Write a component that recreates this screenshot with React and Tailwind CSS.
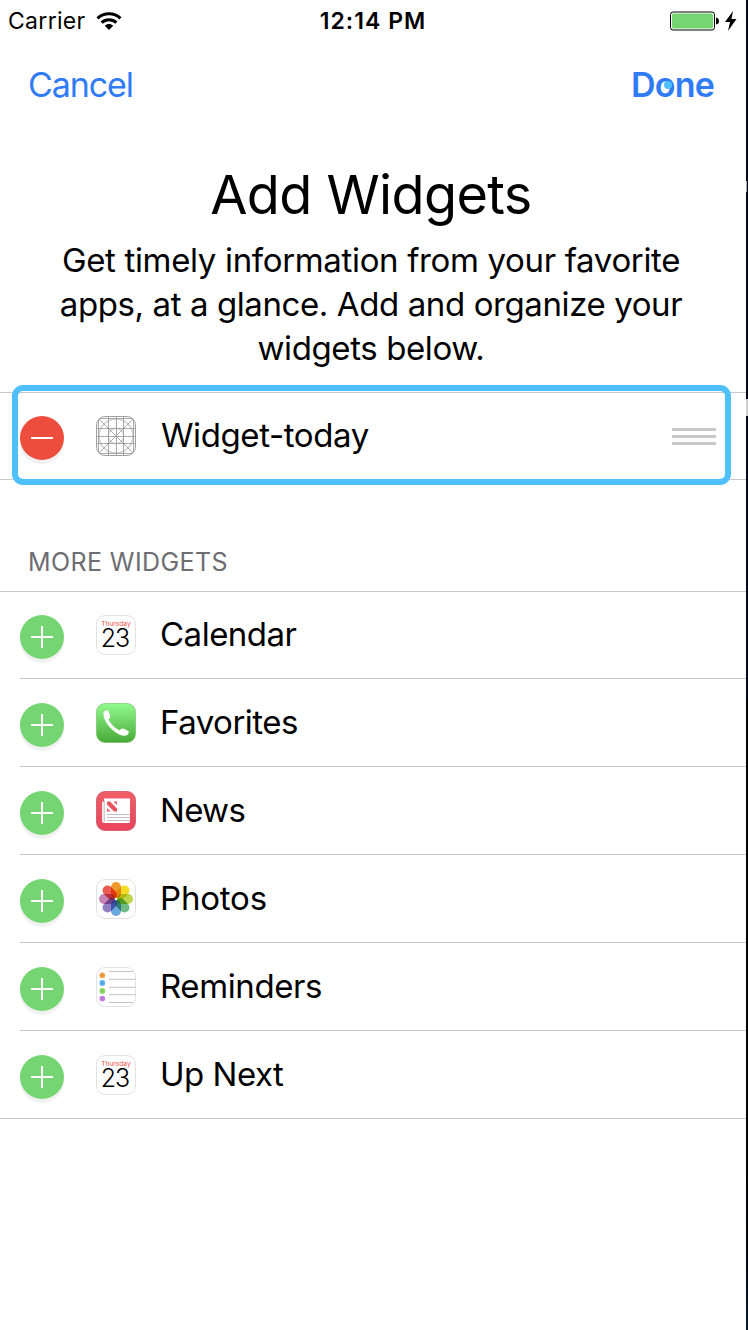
import React from "react";

function RoundButton({ minus }) {
  return (
    <span
      className={
        "mt-6 flex h-11 w-11 shrink-0 items-center justify-center rounded-full shadow-[0_4px_0_#f1f1f1] " +
        (minus ? "bg-[#ec4d3d]" : "bg-[#75d572]")
      }
    >
      <svg width="22" height="22" viewBox="0 0 22 22" stroke="#fff" strokeWidth="2">
        <path d={minus ? "M0 11H22" : "M0 11H22M11 0V22"} />
      </svg>
    </span>
  );
}

function GridIcon() {
  return (
    <svg className="block" width="40" height="40" viewBox="0 0 40 40" fill="none" stroke="#a0a0a0" strokeWidth="1">
      <circle cx="20" cy="20" r="17" stroke="#cfcfcf" strokeWidth="1.6" />
      <circle cx="20" cy="20" r="7.8" stroke="#cfcfcf" strokeWidth="1.4" />
      <rect x="0.5" y="0.5" width="39" height="39" rx="8.5" />
      <path d="M2.5 4V36M12.5 1V39M20.5 1V39M27.5 1V39M37.5 4V36M4 2.5H36M1 12.5H39M1 20.5H39M1 27.5H39M4 37.5H36" strokeWidth="0.9" />
      <path d="M3 3L37 37M37 3L3 37" strokeWidth="0.9" />
    </svg>
  );
}

function CalendarIcon() {
  return (
    <span className="flex h-10 w-10 flex-col items-center rounded-[9px] border border-[#e2e2e4] bg-white pt-[4px]">
      <span className="text-[6.6px] leading-[8px] whitespace-nowrap text-[#ec4d3d]">Thursday</span>
      <span className="mr-[2px] text-[25px] leading-[20px] font-light tracking-[-1px] text-black">23</span>
    </span>
  );
}

function PhoneIcon() {
  return (
    <svg className="block" width="40" height="40" viewBox="0 0 40 40">
      <defs>
        <linearGradient id="phone" x1="0" y1="0" x2="0" y2="1">
          <stop offset="0" stopColor="#93fa8f" />
          <stop offset="1" stopColor="#47aa37" />
        </linearGradient>
      </defs>
      <rect x="0.5" y="0.5" width="39" height="39" rx="8.5" fill="url(#phone)" stroke="#58b64c" strokeOpacity="0.5" />
      <path
        fill="#fff"
        d="M7.4 10.4C7.4 8.6 9.2 7.2 10.8 7.2C12 7.2 12.6 8.5 13.2 10L14.2 12.7C14.7 14.1 13.9 14.8 13.1 15.5C12.3 16.2 12.5 16.7 13.1 17.8C14.9 20.8 18.5 24.5 21.8 26.6C23 27.3 23.6 27.2 24.4 26.4C25.2 25.5 26 25.1 27.3 25.6L31 27.3C32.5 28 33 28.6 32.6 30C32 32.1 30.2 33 27.8 32.7C19.8 31.7 7.6 20.4 7.4 10.4Z"
      />
    </svg>
  );
}

function NewsIcon() {
  return (
    <svg className="block" width="40" height="40" viewBox="0 0 40 40">
      <defs>
        <linearGradient id="news" x1="0" y1="0" x2="0" y2="1">
          <stop offset="0" stopColor="#ef6068" />
          <stop offset="1" stopColor="#ea445c" />
        </linearGradient>
      </defs>
      <rect x="0.5" y="0.5" width="39" height="39" rx="8.5" fill="url(#news)" stroke="#c9475a" strokeOpacity="0.7" />
      <path d="M6 11.5Q6 10.5 7 10.5H10V32H8Q6 32 6 30Z" fill="#f4f1f1" />
      <path d="M8 7.5H34V30.5Q34 32 32.5 32H7.5Q8.5 31.5 8.5 30Z" fill="#fff" />
      <path d="M8.3 9V31" stroke="#b8a6a8" strokeWidth="0.7" />
      <path d="M11 10.5H14L21 17.5V20.5H18L11 13.5ZM17.5 10.5H21V14ZM11 17V20.5H14.5Z" fill="#ec5361" />
      <path d="M22.5 23.5H34M11 23.5H34M11 26.5H34M11 29.5H34" stroke="#bfc0c2" strokeWidth="1.2" />
    </svg>
  );
}

const petals = [
  ["#f09a2e", 0],
  ["#f2dc25", 45],
  ["#bdd54b", 90],
  ["#6dbb83", 135],
  ["#6ba6de", 180],
  ["#9080c2", 225],
  ["#c784b8", 270],
  ["#ea5b51", 315],
];

function PhotosIcon() {
  return (
    <svg className="isolate block" width="40" height="40" viewBox="0 0 40 40">
      <rect x="0.5" y="0.5" width="39" height="39" rx="8.5" fill="#fff" stroke="#e2e2e4" />
      {petals.map(([color, angle]) => (
        <rect
          key={angle}
          className="mix-blend-multiply"
          x="15"
          y="3"
          width="10"
          height="16"
          rx="5"
          fill={color}
          transform={`rotate(${angle} 20 20)`}
        />
      ))}
      <circle cx="20" cy="20" r="1" fill="#fff" />
    </svg>
  );
}

function RemindersIcon() {
  return (
    <svg className="block" width="40" height="40" viewBox="0 0 40 40">
      <rect x="0.5" y="0.5" width="39" height="39" rx="8.5" fill="#fff" stroke="#e2e2e4" />
      <path d="M13 4.5H37M13 12.3H39.5M13 20.3H39.5M13 27.7H39.5M13 35.5H37" stroke="#c4c4c6" strokeWidth="1" />
      {[["#f5a44a", 8.3], ["#5db4f3", 16], ["#8edc66", 24], ["#c784e6", 31.6]].map(([color, y]) => (
        <g key={y} fill={color}>
          <circle cx="6.3" cy={y} r="2.9" />
          <circle cx="6.3" cy={y} r="1.2" fill="#000" fillOpacity="0.12" />
        </g>
      ))}
    </svg>
  );
}

const widgets = [
  ["Calendar", CalendarIcon, "tracking-[-0.5px]"],
  ["Favorites", PhoneIcon, "tracking-[-0.5px]"],
  ["News", NewsIcon, "tracking-[-0.7px]"],
  ["Photos", PhotosIcon, "tracking-[-0.2px]"],
  ["Reminders", RemindersIcon, "tracking-[-0.4px]"],
  ["Up Next", CalendarIcon, "tracking-[-0.5px]"],
];

export default function App() {
  return (
    <div className="flex h-[1330px] w-[748px] overflow-hidden bg-white font-['Inter',sans-serif] text-black">
      <main className="flex w-[746px] flex-col">
        <header className="grid h-[41px] grid-cols-3 items-center">
          <div className="flex items-center gap-[10px] pl-2">
            <span className="text-[23px] leading-[42px] tracking-[0.3px]">Carrier</span>
            <svg width="26" height="18" viewBox="0 0 26 18" fill="none" stroke="#000" strokeWidth="3">
              <path d="M1.5 6.3C8 0.2 18 0.2 24.5 6.3" />
              <path d="M5.6 10.7C9.8 6.8 16.2 6.8 20.4 10.7" />
              <path d="M8.8 13.8C11.2 11.4 14.8 11.4 17.2 13.8L13 18Z" fill="#000" stroke="none" />
            </svg>
          </div>
          <div className="text-center text-[23px] leading-[42px] font-semibold tracking-[1.05px]">12:14 PM</div>
          <div className="flex items-center justify-end gap-[5px] pr-[9px]">
            <svg width="50" height="20" viewBox="0 0 50 20">
              <rect x="0.5" y="1" width="44" height="18" rx="2.5" fill="#fff" stroke="#000" />
              <rect x="2" y="2.5" width="41" height="15" rx="1.5" fill="#75d572" />
              <path d="M46 6.5Q49 7 49 10Q49 13 46 13.5Z" />
            </svg>
            <svg width="12" height="20" viewBox="0 0 12 20">
              <path d="M8 0L0 11H5L3 20L11.5 8H6.5Z" />
            </svg>
          </div>
        </header>

        <nav className="flex h-[88px] items-center justify-between pr-[32px] pl-7 text-[#2f7cf6]">
          <button className="text-[34px] leading-[44px] tracking-[-1.1px]">Cancel</button>
          <button className="relative text-[34px] leading-[44px] font-semibold tracking-[-0.8px]">
            Done
            <span className="absolute top-[18px] left-[33px] h-2 w-2 rounded-full bg-[#4fc0fb]" />
          </button>
        </nav>

        <section className="flex h-[263px] flex-col items-center pt-[32px] pr-1 text-center">
          <h1 className="text-[54px] leading-[68px] tracking-[-0.6px]">Add Widgets</h1>
          <p className="mt-[9px] text-[33px] leading-[44px] tracking-[-0.4px]">
            <span className="tracking-[-0.34px]">Get timely information from your favorite</span>
            <br />
            apps, at a glance. Add and organize your
            <br />
            widgets below.
          </p>
        </section>

        <section className="relative flex h-[88px] items-start border-y border-[#c8c7cc] pl-5">
          <div className="-mt-px">
            <RoundButton minus />
          </div>
          <div className="mt-[23px] ml-8">
            <GridIcon />
          </div>
          <span className="mt-[20px] ml-[25px] text-[33px] leading-[44px] tracking-[-0.4px]">Widget-today</span>
          <span className="mt-[35px] mr-[30px] ml-auto flex flex-col gap-1">
            <span className="h-[3px] w-11 bg-[#c7c7cc]" />
            <span className="h-[3px] w-11 bg-[#c7c7cc]" />
            <span className="h-[3px] w-11 bg-[#c7c7cc]" />
          </span>
          <div className="absolute -top-2 left-3 h-[100px] w-[719px] rounded-[11px] border-6 border-[#4fc0fb]" />
        </section>

        <h2 className="h-[111px] pt-[65px] pl-7 text-[25px] leading-[34px] tracking-[0.4px] text-[#6d6d72]">MORE WIDGETS</h2>

        <ul className="shadow-[0_-1px_0_#c8c7cc_inset,0_1px_0_#c8c7cc_inset]">
          {widgets.map(([name, Icon, tracking]) => (
            <li key={name} className="pl-5">
              <div className="flex h-[88px] items-start border-b border-[#c8c7cc]">
                <RoundButton />
                <div className="mt-6 ml-8">
                  <Icon />
                </div>
                <span className={"mt-[21px] ml-[24px] text-[33px] leading-[44px] " + tracking}>{name}</span>
              </div>
            </li>
          ))}
        </ul>
      </main>
      <aside className="flex w-[2px] flex-col bg-[#02081c]">
        <div className="mt-[181px] h-[11px] w-px bg-[#a9abae]" />
        <div className="mt-[207px] h-[17px] bg-[#cfcfcf]" />
        <div className="mt-[284px] h-[450px] bg-black" />
        <div className="grow bg-linear-to-b from-black to-[#071a30]" />
      </aside>
    </div>
  );
}
